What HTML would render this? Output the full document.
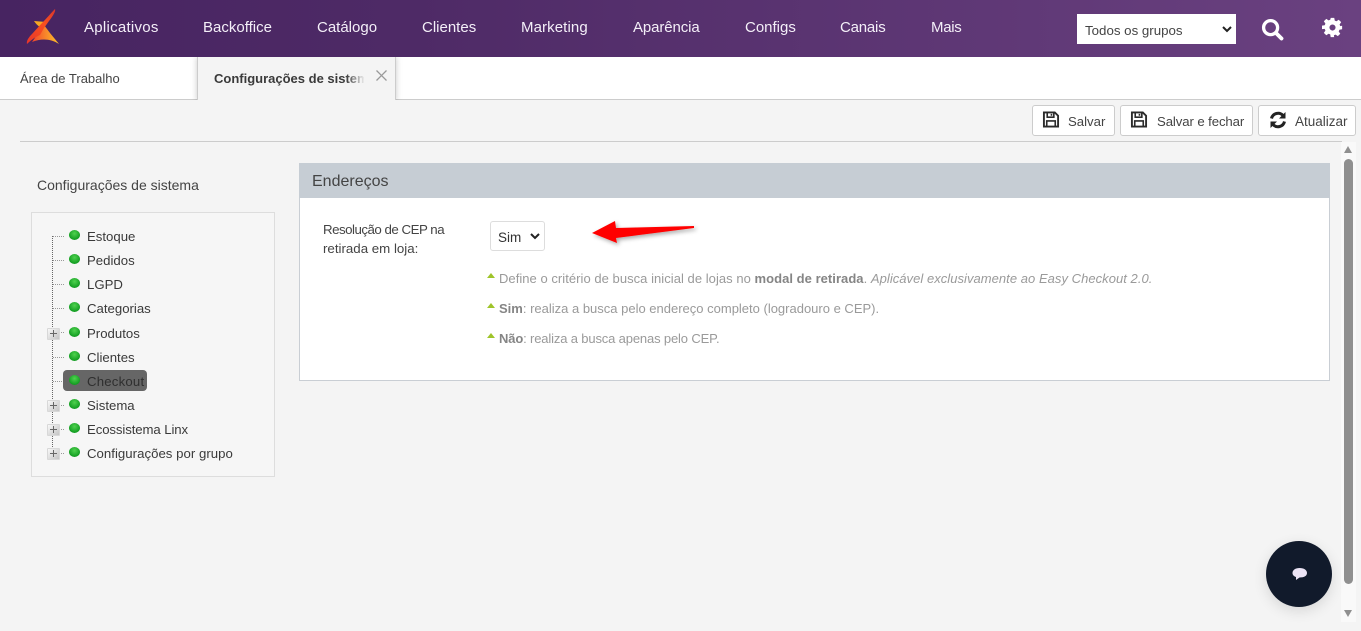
<!DOCTYPE html>
<html lang="pt-BR">
<head>
<meta charset="utf-8">
<title>Configurações de sistema</title>
<style>
*{box-sizing:border-box}
html,body{margin:0;padding:0;width:1361px;height:631px;overflow:hidden;background:#f4f4f4;font-family:"Liberation Sans",sans-serif;color:#333}
.t{position:absolute;white-space:nowrap;line-height:18px}
.a{position:absolute}
#top{left:0;top:0;width:1361px;height:57px;background:linear-gradient(90deg,#472461 0%,#4e2a66 30%,#6a4180 100%)}
.nav{top:19px;font-size:15px;color:#f4eff8}
.btn{position:absolute;top:105px;height:31px;background:#fff;border:1px solid #ccc;border-radius:3px}
.btn .t{font-size:13.2px;color:#444;top:7px}
.tree{font-size:13.2px;color:#3a3a3a;left:87px}
.dot{position:absolute;left:69px;width:11px;height:10px;border-radius:50%;background:radial-gradient(circle at 50% 35%,#4fd24f,#0f9a1f 75%)}
.hl{position:absolute;left:53px;width:11px;border-top:1px dotted #999;height:1px}
.pl{position:absolute;left:47px;width:13px;height:12px;background:linear-gradient(135deg,#f8f8f8,#c4c4c4);border:1px solid #d8d8d8;border-radius:1px}
.pl:before{content:"";position:absolute;left:2px;top:4px;width:7px;height:1px;background:#666}
.pl:after{content:"";position:absolute;left:5px;top:1px;width:1px;height:7px;background:#666}
.tri{position:absolute;left:487px;width:0;height:0;border-left:4.5px solid transparent;border-right:4.5px solid transparent;border-bottom:5px solid #9fc42a}
.help{left:499px;font-size:13px;color:#9a9a9a}
.help b{color:#858585}
</style>
</head>
<body>
<div class="a" id="top"></div>

<svg class="a" style="left:24px;top:8px" width="37" height="38" viewBox="0 0 37 38">
<defs>
<linearGradient id="g1" x1="0" y1="1" x2="1" y2="0"><stop offset="0" stop-color="#e8352a"/><stop offset=".6" stop-color="#f8501f"/><stop offset="1" stop-color="#d8352e"/></linearGradient>
<linearGradient id="g2" x1="0" y1="0" x2="1" y2="0"><stop offset="0" stop-color="#f4442a"/><stop offset=".5" stop-color="#f7852a"/><stop offset="1" stop-color="#fdc02a"/></linearGradient>
</defs>
<path d="M10 13 L22 14 L19 21 C15 19 12 16 10 13 Z" fill="#f7a823"/>
<path d="M20 17 L26 25 L35 36 C27 31 18 30 8 34 Z" fill="url(#g2)"/>
<path d="M31 1 C32 3 29 8 25 13 L20 20 L16 27 C11 29 6 33 3 36 C2 33 5 29 8 26 L18 15 C23 10 28 4 31 1 Z" fill="url(#g1)"/>
</svg>

<div class="t nav" style="left:84px;letter-spacing:.27px">Aplicativos</div>
<div class="t nav" style="left:203px">Backoffice</div>
<div class="t nav" style="left:317px">Catálogo</div>
<div class="t nav" style="left:422px">Clientes</div>
<div class="t nav" style="left:521px;letter-spacing:.1px">Marketing</div>
<div class="t nav" style="left:633px;letter-spacing:-.1px">Aparência</div>
<div class="t nav" style="left:745px">Configs</div>
<div class="t nav" style="left:840px;letter-spacing:-.2px">Canais</div>
<div class="t nav" style="left:931px;letter-spacing:-.3px">Mais</div>

<div class="a" style="left:1077px;top:14px;width:159px;height:30px;background:#fff"></div>
<div class="t" style="left:1085px;top:22px;font-size:13.3px;color:#444">Todos os grupos</div>
<svg class="a" style="left:1221px;top:25px" width="12" height="9" viewBox="0 0 12 9"><path d="M2 2 L6 6 L10 2" fill="none" stroke="#222" stroke-width="2"/></svg>

<svg class="a" style="left:1261px;top:18px" width="24" height="23" viewBox="0 0 24 23"><circle cx="9.6" cy="9.6" r="7" fill="none" stroke="#fff" stroke-width="3.3"/><path d="M15 15 L20.5 20.5" stroke="#fff" stroke-width="3.8" stroke-linecap="round"/></svg>
<svg class="a" style="left:1322px;top:17px" width="21" height="21" viewBox="0 0 24 24"><path fill="#fff" fill-rule="evenodd" d="M10 1h4l.6 3.1 1.9.8 2.6-1.8 2.8 2.8-1.8 2.6.8 1.9L23 10v4l-3.1.6-.8 1.9 1.8 2.6-2.8 2.8-2.6-1.8-1.9.8L13.9 23h-4l-.5-3.1-1.9-.8-2.6 1.8-2.8-2.8 1.8-2.6-.8-1.9L0 13.9v-4l3.1-.5.8-1.9L2.1 4.9l2.8-2.8 2.6 1.8 1.9-.8zM12 8.5a3.5 3.5 0 1 0 0 7 3.5 3.5 0 0 0 0-7z"/></svg>

<div class="a" style="left:0;top:57px;width:1361px;height:43px;background:#fff;border-bottom:1px solid #ccc"></div>
<div class="t" style="left:20px;top:70px;font-size:13px;color:#444">Área de Trabalho</div>
<div class="a" style="left:197px;top:57px;width:199px;height:44px;background:#f4f4f4;border-left:1px solid #ccc;border-right:1px solid #ccc;box-shadow:0 0 6px rgba(0,0,0,.22);clip-path:inset(0 -8px 1px -8px)"></div>
<div class="a" style="left:214px;top:70px;width:150px;height:20px;overflow:hidden"><div class="t" style="left:0;top:0;font-size:13px;font-weight:bold;color:#3a3a3a">Configurações de sistema</div></div>
<div class="a" style="left:346px;top:70px;width:19px;height:20px;background:linear-gradient(90deg,rgba(244,244,244,0),#f4f4f4)"></div>
<svg class="a" style="left:376px;top:70px" width="11" height="11" viewBox="0 0 11 11"><path d="M.5.5 L10.5 10.5 M10.5.5 L.5 10.5" stroke="#999" stroke-width="1.3"/></svg>

<div class="btn" style="left:1032px;width:83px">
<svg class="a" style="left:9px;top:5px" width="18" height="17" viewBox="0 0 18 18"><path d="M1.5 1.5 H13 L16.5 5 V16.5 H1.5 Z" fill="none" stroke="#2b2b2b" stroke-width="2"/><path d="M5 1.5 V6.5 H12 V1.5 M9.5 3 V5" fill="none" stroke="#2b2b2b" stroke-width="1.7"/><path d="M4.5 16 V10.5 H13.5 V16" fill="none" stroke="#2b2b2b" stroke-width="1.7"/></svg>
<div class="t" style="left:35px">Salvar</div></div>
<div class="btn" style="left:1120px;width:133px">
<svg class="a" style="left:9px;top:5px" width="18" height="17" viewBox="0 0 18 18"><path d="M1.5 1.5 H13 L16.5 5 V16.5 H1.5 Z" fill="none" stroke="#2b2b2b" stroke-width="2"/><path d="M5 1.5 V6.5 H12 V1.5 M9.5 3 V5" fill="none" stroke="#2b2b2b" stroke-width="1.7"/><path d="M4.5 16 V10.5 H13.5 V16" fill="none" stroke="#2b2b2b" stroke-width="1.7"/></svg>
<div class="t" style="left:36px;letter-spacing:-.1px">Salvar e fechar</div></div>
<div class="btn" style="left:1258px;width:98px">
<svg class="a" style="left:10px;top:5px" width="18" height="18" viewBox="0 0 18 18"><path d="M2.5 7.5 A6.7 6.7 0 0 1 14 4.5" fill="none" stroke="#222" stroke-width="3"/><path d="M16.5 1 V7.5 H10 Z" fill="#222"/><path d="M15.5 10.5 A6.7 6.7 0 0 1 4 13.5" fill="none" stroke="#222" stroke-width="3"/><path d="M1.5 17 V10.5 H8 Z" fill="#222"/></svg>
<div class="t" style="left:36px;font-size:13.5px">Atualizar</div></div>

<div class="a" style="left:20px;top:141px;width:1322px;height:1px;background:#ccc"></div>

<div class="a" style="left:1341px;top:142px;width:15px;height:480px;background:#f9f9f9"></div>
<div class="a" style="left:1344px;top:159px;width:9px;height:425px;background:#8f8f8f;border-radius:5px"></div>
<div class="a" style="left:1344px;top:146px;width:0;height:0;border-left:4.5px solid transparent;border-right:4.5px solid transparent;border-bottom:7px solid #8f8f8f"></div>
<div class="a" style="left:1344px;top:610px;width:0;height:0;border-left:4.5px solid transparent;border-right:4.5px solid transparent;border-top:7px solid #8f8f8f"></div>

<div class="t" style="left:37px;top:176px;font-size:14px;color:#444">Configurações de sistema</div>
<div class="a" style="left:31px;top:212px;width:244px;height:265px;border:1px solid #ddd;background:#f6f6f6"></div>
<div class="a" style="left:52px;top:236px;width:1px;height:217px;border-left:1px dotted #666"></div>

<div class="hl" style="top:236px"></div><div class="dot" style="top:230px"></div><div class="t tree" style="top:228px">Estoque</div>
<div class="hl" style="top:260px"></div><div class="dot" style="top:254px"></div><div class="t tree" style="top:252px">Pedidos</div>
<div class="hl" style="top:284px"></div><div class="dot" style="top:278px"></div><div class="t tree" style="top:276px">LGPD</div>
<div class="hl" style="top:308px"></div><div class="dot" style="top:302px"></div><div class="t tree" style="top:300px">Categorias</div>
<div class="hl" style="top:332px"></div><div class="pl" style="top:328px"></div><div class="dot" style="top:327px"></div><div class="t tree" style="top:325px">Produtos</div>
<div class="hl" style="top:357px"></div><div class="dot" style="top:351px"></div><div class="t tree" style="top:349px">Clientes</div>
<div class="hl" style="top:381px"></div><div class="a" style="left:63px;top:370px;width:84px;height:21px;background:#666;border-radius:4px"></div><div class="dot" style="top:375px"></div><div class="t tree" style="top:373px;color:#2f2f2f;letter-spacing:.2px">Checkout</div>
<div class="hl" style="top:405px"></div><div class="pl" style="top:400px"></div><div class="dot" style="top:399px"></div><div class="t tree" style="top:397px">Sistema</div>
<div class="hl" style="top:429px"></div><div class="pl" style="top:424px"></div><div class="dot" style="top:423px"></div><div class="t tree" style="top:421px;letter-spacing:-.1px">Ecossistema Linx</div>
<div class="hl" style="top:453px"></div><div class="pl" style="top:448px"></div><div class="dot" style="top:447px"></div><div class="t tree" style="top:445px;letter-spacing:.03px">Configurações por grupo</div>

<div class="a" style="left:299px;top:163px;width:1031px;height:218px;background:#fff;border:1px solid #c9ced4"></div>
<div class="a" style="left:299px;top:163px;width:1031px;height:35px;background:#c6cdd4"></div>
<div class="t" style="left:312px;top:173px;font-size:16px;color:#444">Endereços</div>

<div class="t" style="left:323px;top:220px;font-size:13.3px;line-height:19px;color:#444"><span style="letter-spacing:-.5px">Resolução de CEP na</span><br>retirada em loja:</div>
<div class="a" style="left:490px;top:221px;width:55px;height:30px;background:#fff;border:1px solid #ddd;border-radius:3px"></div>
<div class="t" style="left:498px;top:229px;font-size:13.5px;color:#333">Sim</div>
<svg class="a" style="left:529px;top:232px" width="12" height="9" viewBox="0 0 12 9"><path d="M2 2 L6 6 L10 2" fill="none" stroke="#222" stroke-width="2"/></svg>

<svg class="a" style="left:585px;top:215px" width="116" height="36" viewBox="0 0 116 36">
<defs><filter id="s" x="-20%" y="-40%" width="140%" height="200%"><feDropShadow dx="2" dy="2" stdDeviation="2" flood-color="#000" flood-opacity=".35"/></filter></defs>
<path d="M7 18 L30 6 L31 13 L109 11 L109 13 L31 23 L32 28 Z" fill="#f00" filter="url(#s)"/>
</svg>

<div class="tri" style="top:273px"></div>
<div class="t help" style="top:270px;letter-spacing:.04px">Define o critério de busca inicial de lojas no <b>modal de retirada</b>. <i>Aplicável exclusivamente ao Easy Checkout 2.0.</i></div>
<div class="tri" style="top:303px"></div>
<div class="t help" style="top:300px"><b>Sim</b>: realiza a busca pelo endereço completo (logradouro e CEP).</div>
<div class="tri" style="top:333px"></div>
<div class="t help" style="top:330px;letter-spacing:-.15px"><b>Não</b>: realiza a busca apenas pelo CEP.</div>

<div class="a" style="left:1266px;top:541px;width:66px;height:66px;border-radius:50%;background:#111a2b;box-shadow:0 4px 14px rgba(0,0,0,.12)"></div>
<svg class="a" style="left:1291px;top:567px" width="18" height="14" viewBox="0 0 18 14"><path d="M8.5 1 C13 1 16 3 16 6 C16 9 13 10.5 8.5 10.5 L5 13 L5 10 C3 9.4 1.5 8 1.5 6 C1.5 3 4.5 1 8.5 1 Z" fill="#ece4f5"/></svg>
</body>
</html>
